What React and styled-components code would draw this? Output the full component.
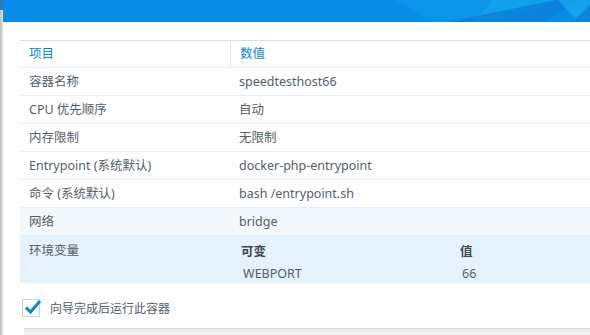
import React from 'react';
import styled, { createGlobalStyle } from 'styled-components';

const GlobalStyle = createGlobalStyle`
  body {
    margin: 0;
    font-family: "Noto Sans", "Noto Sans CJK SC", sans-serif;
  }
`;

const Page = styled.div`
  width: 590px;
  height: 335px;
  display: flex;
  overflow: hidden;
  background: #ffffff;
`;

const SideEdge = styled.div`
  width: 3px;
  flex-shrink: 0;
  background: linear-gradient(to bottom, #2c78c0 0, #2c78c0 10px, transparent 10px),
    linear-gradient(to right, #bcbcbc, #e4e4e4);
`;

const Main = styled.div`
  flex: 1;
  display: flex;
  flex-direction: column;
  min-width: 0;
`;

const Banner = styled.header`
  height: 22px;
  flex-shrink: 0;
  background: #078de8;
  overflow: hidden;

  svg {
    display: block;
  }
`;

const Content = styled.div`
  flex: 1;
  padding: 18px 0 0 17px;
  display: flex;
  flex-direction: column;
`;

const Table = styled.div`
  display: grid;
  grid-template-columns: 210px 1fr;
  border-top: 1px solid #d3e0eb;
  font-size: 12.5px;
  color: #535d67;
`;

const Row = styled.div`
  display: contents;

  > div {
    background: ${(p) => (p.$tone === 'hover' ? '#f3f8fd' : p.$tone === 'active' ? '#e4f2fd' : 'transparent')};
    border-bottom: 1px solid ${(p) => (p.$tone === 'active' ? '#e4f2fd' : '#e8edf1')};
  }
`;

const Cell = styled.div`
  height: ${(p) => (p.$head ? '26px' : '27px')};
  line-height: ${(p) => (p.$head ? '26px' : '27px')};
  padding-left: 9px;
  white-space: nowrap;
  color: ${(p) => (p.$head ? '#0b86e2' : 'inherit')};
  border-left: ${(p) => (p.$divider ? '1px solid #dde6ee' : 'none')};
`;

const TallCell = styled.div`
  height: 47px;
  padding: 5px 0 0 9px;
  box-sizing: border-box;
  line-height: 20px;
`;

const EnvCell = styled.div`
  height: 47px;
  padding: 6px 0 0 11px;
  box-sizing: border-box;
`;

const EnvGrid = styled.div`
  display: grid;
  grid-template-columns: 219px 1fr;
  row-gap: 2px;
  line-height: 20px;
`;

const EnvHead = styled.div`
  font-weight: 700;
  color: #3f4852;
`;

const EnvValue = styled.div`
  padding-left: 2px;
`;

const CheckRow = styled.label`
  display: flex;
  align-items: center;
  gap: 10px;
  margin: 16px 0 0 2px;
  font-size: 12px;
  color: #535d67;
`;

const CheckBox = styled.span`
  position: relative;
  width: 16px;
  height: 16px;
  border: 1px solid #c9d1d9;
  background: #ffffff;
  flex-shrink: 0;

  svg {
    position: absolute;
    left: 1px;
    top: -1px;
  }
`;

const Footer = styled.div`
  margin: auto 0 0 4px;
  height: 6px;
  border-top: 1px solid #d6d6d6;
  background: linear-gradient(to bottom, #ececec, #f6f6f6);
`;

const rows = [
  ['容器名称', 'speedtesthost66'],
  ['CPU 优先顺序', '自动'],
  ['内存限制', '无限制'],
  ['Entrypoint (系统默认)', 'docker-php-entrypoint'],
  ['命令 (系统默认)', 'bash /entrypoint.sh'],
];

const App = () => (
  <>
    <GlobalStyle />
    <Page>
      <SideEdge />
      <Main>
        <Banner>
          <svg width="587" height="22" viewBox="0 0 587 22">
            <polygon points="392,0 560,0 470,22 430,22" fill="#0d97e9" opacity="0.7" />
            <polygon points="490,0 555,0 500,22 470,22" fill="#12a2ec" opacity="0.8" />
            <polygon points="445,22 552,0 575,0 540,22" fill="#0a7fd9" opacity="0.85" />
            <polygon points="555,0 587,0 587,8 575,22" fill="#16a4ee" opacity="0.85" />
            <polygon points="570,22 587,4 587,22" fill="#0b84dc" />
          </svg>
        </Banner>
        <Content>
          <Table>
            <Row>
              <Cell $head>项目</Cell>
              <Cell $head $divider>数值</Cell>
            </Row>
            {rows.map(([k, v]) => (
              <Row key={k}>
                <Cell>{k}</Cell>
                <Cell>{v}</Cell>
              </Row>
            ))}
            <Row $tone="hover">
              <Cell>网络</Cell>
              <Cell>bridge</Cell>
            </Row>
            <Row $tone="active">
              <TallCell>环境变量</TallCell>
              <EnvCell>
                <EnvGrid>
                  <EnvHead>可变</EnvHead>
                  <EnvHead>值</EnvHead>
                  <EnvValue>WEBPORT</EnvValue>
                  <EnvValue>66</EnvValue>
                </EnvGrid>
              </EnvCell>
            </Row>
          </Table>
          <CheckRow>
            <CheckBox>
              <svg width="18" height="16" viewBox="0 0 18 16">
                <path d="M2 8.5 L6.5 13 L16 2" fill="none" stroke="#0a86e0" strokeWidth="3" />
              </svg>
            </CheckBox>
            向导完成后运行此容器
          </CheckRow>
          <Footer />
        </Content>
      </Main>
    </Page>
  </>
);

export default App;
